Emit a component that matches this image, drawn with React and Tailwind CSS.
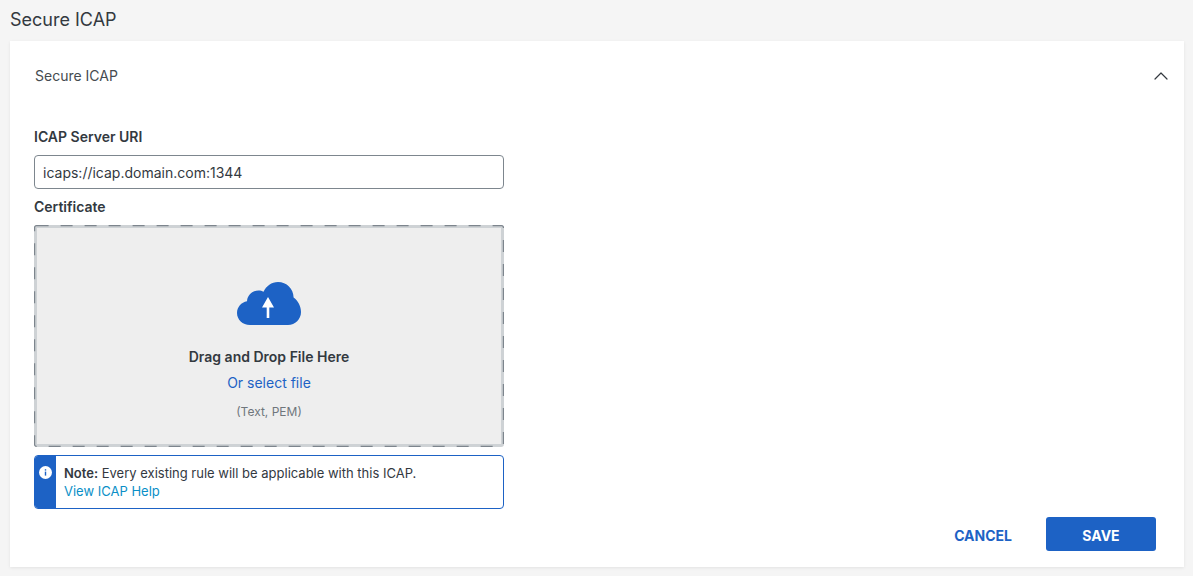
import React from "react";
import { ChevronUp } from "lucide-react";

export default function App() {
  return (
    <div className="h-[576px] w-[1193px] overflow-hidden bg-[#f5f5f5] px-[10px] font-['Inter',sans-serif] text-[#33393f]">
      <h1 className="h-[41px] pt-[8px] text-[18px] leading-[24px]">Secure ICAP</h1>
      <div className="flex h-[526px] w-[1174px] flex-col bg-white pl-[24px] pr-[24px] shadow-[0_1px_3px_rgba(0,0,0,0.08)]">
        <div className="flex h-[70px] shrink-0 items-center justify-between pl-px">
          <span className="text-[14px] leading-[20px] text-[#454b50]">Secure ICAP</span>
          <ChevronUp className="-mr-[13px] h-[24px] w-[24px] text-[#33393f]" strokeWidth={1.2} />
        </div>
        <div className="w-[470px] shrink-0">
          <label className="mt-[16px] block text-[14px] font-semibold leading-[20px]">ICAP Server URI</label>
          <input
            readOnly
            value="icaps://icap.domain.com:1344"
            className="mt-[8px] block h-[34px] w-full rounded-[4px] border border-[#7d868e] bg-white px-[8px] font-['Inter',sans-serif] text-[14px] text-[#33393f] outline-none"
          />
          <label className="mt-[8px] block text-[14px] font-semibold leading-[20px]">Certificate</label>
          <div className="relative mt-[8px] flex h-[222px] flex-col items-center rounded-[3px] border-[3px] border-[#ced2d5] bg-[#eeeeee]">
            <svg className="absolute -left-[3px] -top-[3px] h-[222px] w-[470px]" viewBox="0 0 470 222" fill="none">
              <rect x="0.6" y="0.6" width="468.8" height="220.8" rx="2" stroke="#7d858d" strokeWidth="1.2" strokeDasharray="12 12" />
            </svg>
            <svg className="mt-[54px] h-[44px] w-[64px]" viewBox="0 0 64 44">
              <path
                fill="#1d62c5"
                d="M13 43C5.5 43 0 37.5 0 31c0-6 4.3-10.8 10-11.8C10.6 12.8 15.6 8.6 21.5 8.6c2 0 3.5.4 5 1.1C29.2 4 34.6 0 41 0c8.7 0 15.4 6.6 15.6 15.6C61 19 64 24.2 64 30c0 7.3-5.8 13-13 13Z"
              />
              <path fill="#fff" d="M31 15 25 25.5H29.7V36H32.3V25.5H37Z" />
            </svg>
            <p className="mt-[21px] text-[14px] font-semibold leading-[20px]">Drag and Drop File Here</p>
            <a className="mt-[6px] text-[14px] leading-[20px] text-[#1d62c5]">Or select file</a>
            <p className="mt-[10px] text-[12px] leading-[18px] text-[#6f767c]">(Text, PEM)</p>
          </div>
          <div className="mt-[8px] flex h-[54px] overflow-hidden rounded-[4px] border border-[#1d62c5]">
            <div className="flex w-[21px] shrink-0 justify-center bg-[#1d62c5] pt-[10px]">
              <svg className="h-[13px] w-[13px]" viewBox="0 0 13 13">
                <circle cx="6.5" cy="6.5" r="6.5" fill="#fff" />
                <rect x="5.8" y="5.6" width="1.4" height="4" fill="#1d62c5" />
                <rect x="5.8" y="3.2" width="1.4" height="1.4" fill="#1d62c5" />
              </svg>
            </div>
            <div className="pl-[8px] pt-[8px] text-[13px] leading-[18px]">
              <p><span className="font-semibold">Note:</span> Every existing rule will be applicable with this ICAP.</p>
              <a className="text-[#0a8fc7]">View ICAP Help</a>
            </div>
          </div>
        </div>
        <div className="mt-[8px] flex justify-end gap-[34px] pr-[4px]">
          <button className="pt-[2px] text-[14px] font-bold text-[#1d62c5]">CANCEL</button>
          <button className="h-[34px] w-[110px] rounded-[3px] bg-[#1d62c5] pt-[2px] text-[14px] font-bold text-white">SAVE</button>
        </div>
      </div>
    </div>
  );
}
